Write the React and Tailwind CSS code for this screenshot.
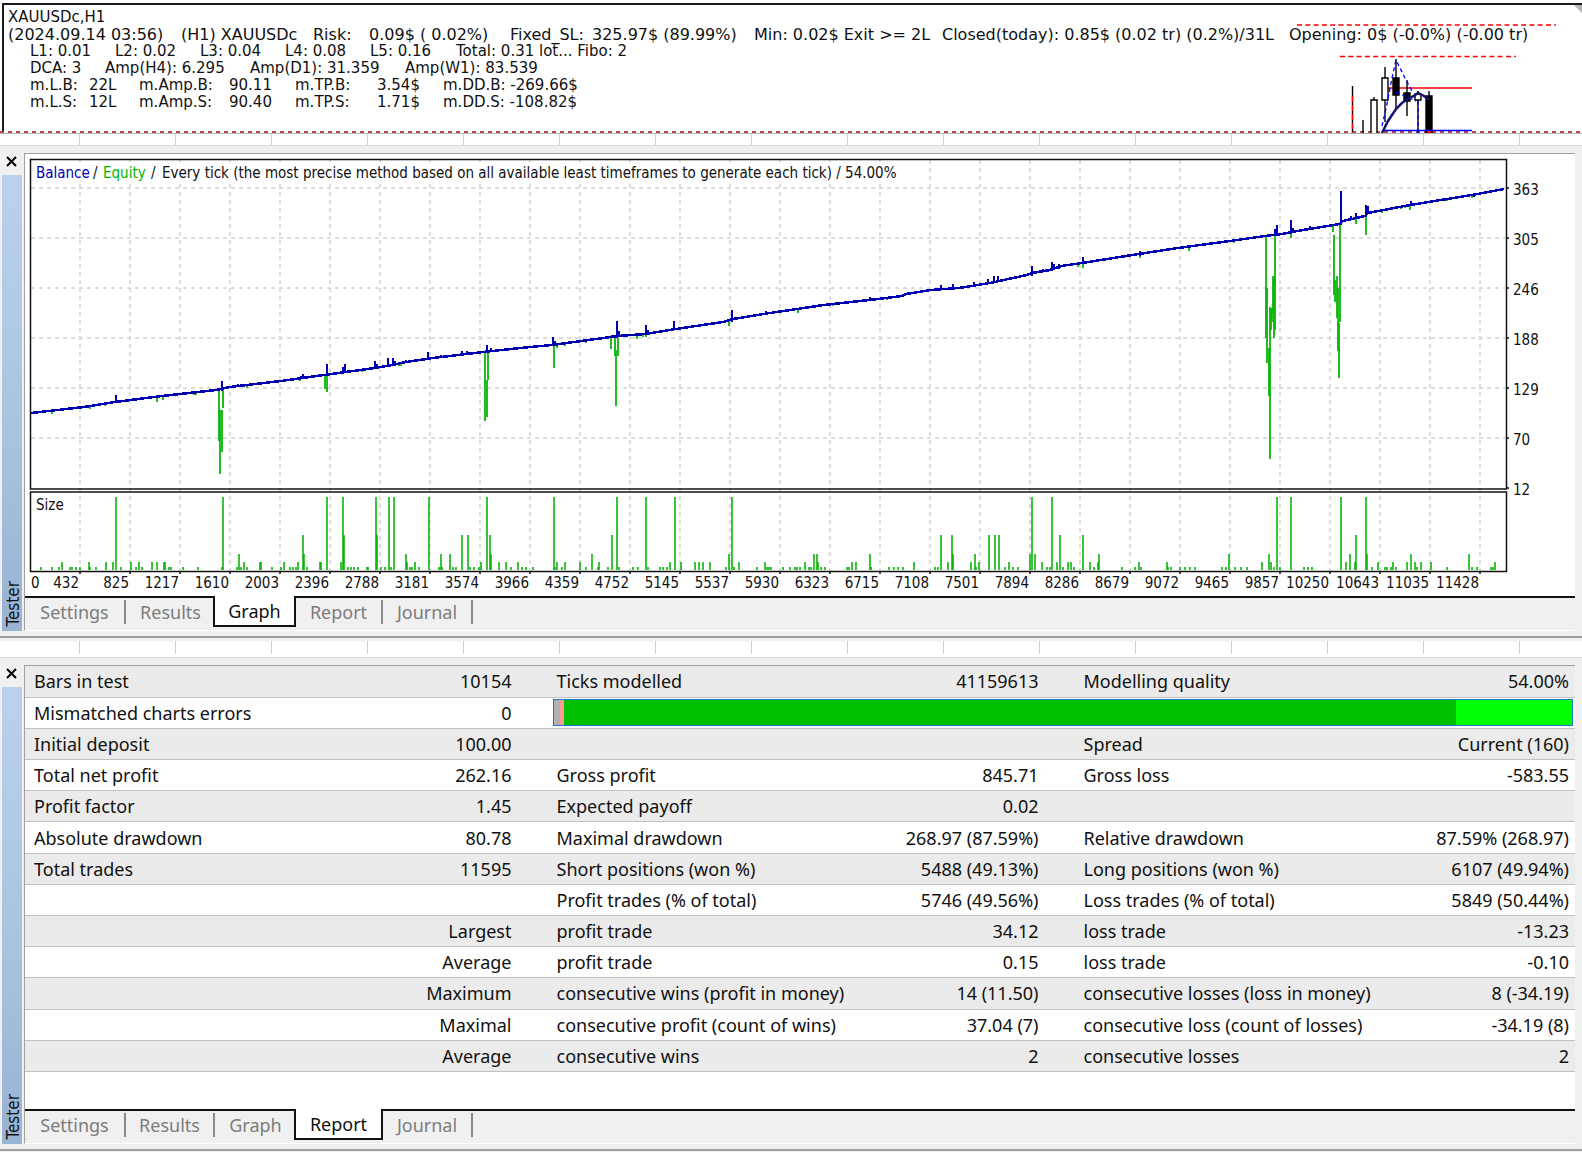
import React from 'react'

const TAHOMA = "font-['DejaVu_Sans_Condensed','Noto_Sans',sans-serif]"
const SEGOE = "font-['Noto_Sans','Open_Sans',sans-serif]"

/* ---------- terminal comment ---------- */

const comment = [
  {
    className: 'flex whitespace-pre text-[16px]',
    parts: [
      ['(2024.09.14 03:56)', 'w-[173px]'],
      ['(H1) XAUUSDc', 'w-[132px]'],
      ['Risk:', 'w-[56px]'],
      ['0.09$ ( 0.02%)', 'w-[141px]'],
      ['Fixed_SL:', 'w-[82px]'],
      ['325.97$ (89.99%)', 'w-[162px]'],
      ['Min: 0.02$ Exit >= 2L', 'w-[188px]'],
      ['Closed(today): 0.85$ (0.02 tr) (0.2%)/31L', 'w-[347px]'],
      ['Opening: 0$ (-0.0%) (-0.00 tr)', ''],
    ],
  },
  {
    className: 'flex whitespace-pre pl-[22px]',
    parts: [
      ['L1: 0.01', 'w-[85px]'],
      ['L2: 0.02', 'w-[85px]'],
      ['L3: 0.04', 'w-[85px]'],
      ['L4: 0.08', 'w-[85px]'],
      ['L5: 0.16', 'w-[86px]'],
      ['Total: 0.31 lot... Fibo: 2', ''],
    ],
  },
  {
    className: 'flex whitespace-pre pl-[22px]',
    parts: [
      ['DCA: 3', 'w-[75px]'],
      ['Amp(H4): 6.295', 'w-[145px]'],
      ['Amp(D1): 31.359', 'w-[155px]'],
      ['Amp(W1): 83.539', ''],
    ],
  },
  {
    className: 'flex whitespace-pre pl-[22px]',
    parts: [
      ['m.L.B:', 'w-[59px]'],
      ['22L', 'w-[50px]'],
      ['m.Amp.B:', 'w-[90px]'],
      ['90.11', 'w-[66px]'],
      ['m.TP.B:', 'w-[82px]'],
      ['3.54$', 'w-[66px]'],
      ['m.DD.B: -269.66$', ''],
    ],
  },
  {
    className: 'flex whitespace-pre pl-[22px]',
    parts: [
      ['m.L.S:', 'w-[59px]'],
      ['12L', 'w-[50px]'],
      ['m.Amp.S:', 'w-[90px]'],
      ['90.40', 'w-[66px]'],
      ['m.TP.S:', 'w-[82px]'],
      ['1.71$', 'w-[66px]'],
      ['m.DD.S: -108.82$', ''],
    ],
  },
]

function Candles() {
  return (
    <svg className="absolute top-0 right-0" width="300" height="133" viewBox="1282 0 300 133" aria-hidden="true">
      <path d="M1574 5h8v8z" fill="#b4b4b4" />
      <g stroke="#f00" strokeWidth="1.500" strokeDasharray="5 3.300">
        <path d="M1297 25H1556" />
        <path d="M1340 56.500H1516" />
      </g>
      <path d="M1388 88H1472" stroke="#f00" strokeWidth="1.400" />
      <path d="M1352.5 86V133" stroke="#000" strokeWidth="1.400" />
      <path d="M1352.5 96V133" stroke="#f00" strokeWidth="1.400" strokeDasharray="6 3" />
      <g stroke="#000" strokeWidth="1.4">
        <path d="M1363 120V133M1374 97V133M1385 67V122M1396 59V108M1407 80V116M1418 91V133M1429 91V97" />
        <path d="M1371 100h6v34h-6zM1382 78h6v22h-6zM1415 94h6v6h-6z" fill="#fff" />
        <path d="M1393 78h6v17h-6zM1404 93h6v8h-6zM1426 96h6v38h-6z" fill="#000" />
      </g>
      <path d="M1383 130.500H1472" stroke="#00f" strokeWidth="1.400" />
      <path d="M1427 131h4v2h-4z" fill="#f00" />
      <g fill="none" stroke="#00f" strokeWidth="1.3" strokeDasharray="4 3">
        <path d="M1382 126L1387 104L1392 78L1396 60L1405 78L1412 91" />
        <path d="M1396 92L1409 98L1416 101" />
        <path d="M1418 101V133" />
      </g>
      <path d="M1382 133L1388 121L1396 109L1402 103L1409 98L1414 96L1418 93L1424 96L1429 100" fill="none" stroke="#15156e" strokeWidth="2.500" />
    </svg>
  )
}

function Ruler({ className }) {
  return (
    <div
      className={
        'bg-white bg-[repeating-linear-gradient(to_right,transparent_0,transparent_79px,#cfcfcf_79px,#cfcfcf_80px,transparent_80px,transparent_96px)] ' +
        className
      }
    />
  )
}

/* ---------- balance graph ---------- */

const balance =
  'M31 413L84 407L115 402L162 396L216 390L230 387L281 381L324 375L375 368L392 365L406 362L433 358L483 352L530 347L552 345L618 336L645 334L676 329L723 322L733 319L770 313L824 305L878 299L902 296L906 294L931 290L959 288L990 283L1027 275L1032 273L1050 270L1061 266L1082 263L1126 256L1178 248L1230 241L1265 236L1282 234L1303 230L1340 224L1343 221L1365 216L1368 213L1410 205L1472 195L1504 189'

// [x, top, bottom] of the floating profit peaks
const peaks = [
  [116, 395, 403], [222, 381, 391], [238, 384, 387], [303, 374, 379], [301, 376, 379], [327, 364, 376], [343, 367, 373], [345, 364, 372],
  [375, 361, 369], [377, 364, 368], [388, 358, 366], [393, 358, 365], [395, 361, 365], [406, 360, 363], [428, 352, 359], [441, 355, 358],
  [462, 351, 355], [467, 351, 354], [487, 345, 353], [491, 348, 352], [553, 337, 346], [555, 341, 346], [612, 335, 338], [617, 321, 338],
  [619, 331, 337], [646, 325, 335], [648, 330, 334], [674, 321, 330], [732, 310, 322], [766, 311, 315], [819, 304, 307], [870, 297, 301],
  [941, 285, 290], [953, 284, 289], [974, 282, 286], [988, 279, 284], [994, 276, 283], [998, 276, 282], [1032, 266, 276], [1043, 269, 272],
  [1052, 262, 271], [1054, 264, 270], [1059, 264, 269], [1083, 257, 264], [1098, 259, 262], [1140, 251, 256], [1169, 248, 251],
  [1275, 229, 236], [1277, 225, 236], [1291, 220, 234], [1293, 228, 233], [1310, 226, 230], [1341, 191, 225], [1351, 216, 220],
  [1356, 213, 219], [1366, 205, 217], [1368, 206, 214], [1411, 201, 206], [1474, 193, 197],
]

// [x, top, bottom] of the equity dips
const dips = [
  [52, 409, 414], [90, 406, 409], [105, 403, 406], [143, 398, 400], [157, 396, 402], [163, 395, 400], [194, 392, 395], [196, 392, 395],
  [219, 390, 441], [220, 410, 474], [222, 410, 452], [223, 388, 408], [247, 385, 388], [300, 378, 381], [325, 376, 389], [327, 375, 392],
  [358, 370, 372], [362, 369, 372], [399, 363, 366], [401, 363, 366], [485, 352, 421], [487, 380, 417], [488, 352, 380], [554, 345, 368],
  [557, 345, 348], [565, 343, 346], [586, 341, 343], [611, 337, 349], [615, 338, 356], [616, 350, 406], [618, 338, 356], [637, 334, 339],
  [643, 334, 337], [646, 334, 337], [655, 331, 334], [662, 330, 333], [697, 325, 327], [729, 320, 326], [798, 308, 313], [808, 307, 309],
  [833, 304, 306], [887, 298, 300], [1078, 264, 267], [1083, 263, 268], [1140, 254, 258], [1189, 247, 251], [1234, 241, 243],
  [1266, 236, 338], [1267, 288, 363], [1269, 348, 396], [1270, 307, 459], [1271, 308, 330], [1272, 308, 322], [1273, 276, 313],
  [1274, 278, 338], [1275, 234, 330], [1291, 232, 238], [1333, 225, 232], [1334, 235, 295], [1335, 280, 302], [1337, 276, 318],
  [1338, 288, 351], [1339, 323, 378], [1340, 222, 322], [1356, 218, 224], [1366, 215, 235], [1382, 210, 213], [1401, 206, 209],
  [1405, 206, 208], [1410, 205, 210], [1447, 199, 201], [1472, 195, 198],
]

// order sizes: top coordinate of the bar and the positions that reach it
const sizes = [
  [497, [116, 223, 327, 343, 376, 389, 394, 429, 487, 554, 617, 646, 675, 732, 1032, 1052, 1277, 1291, 1341, 1366]],
  [535, [303, 344, 377, 462, 468, 490, 612, 941, 952, 989, 995, 999, 1060, 1083, 1356]],
  [554, [239, 304, 406, 441, 450, 491, 592, 729, 814, 817, 870, 953, 975, 1030, 1035, 1099, 1229, 1269, 1350, 1367, 1411, 1469]],
  [562, [62, 89, 106, 113, 131, 139, 152, 157, 164, 165, 244, 260, 261, 284, 298, 320, 321, 341, 407, 415, 481, 499, 506, 518, 557, 565, 580, 599, 670, 681, 695, 699, 703, 710, 739, 765, 805, 818, 852, 856, 914, 948, 971, 979, 1009, 1042, 1057, 1068, 1071, 1090, 1098, 1139, 1167, 1262, 1271, 1346, 1355, 1378, 1393, 1407, 1415, 1421, 1431, 1495]],
  [567, [41, 52, 59, 70, 72, 76, 80, 90, 96, 121, 136, 142, 169, 171, 183, 198, 222, 237, 241, 247, 272, 281, 290, 293, 296, 307, 348, 351, 354, 358, 367, 368, 381, 385, 391, 410, 412, 419, 439, 442, 453, 456, 470, 474, 479, 511, 522, 526, 533, 555, 562, 586, 598, 608, 619, 633, 638, 648, 660, 663, 667, 726, 734, 757, 767, 769, 771, 783, 790, 795, 797, 800, 809, 811, 821, 825, 847, 849, 871, 889, 894, 898, 903, 935, 938, 976, 1005, 1013, 1018, 1047, 1050, 1063, 1074, 1094, 1122, 1135, 1141, 1168, 1171, 1180, 1185, 1190, 1195, 1222, 1226, 1235, 1241, 1247, 1274, 1280, 1304, 1308, 1312, 1372, 1385, 1387, 1391, 1396, 1417, 1447, 1472, 1477, 1491, 1493]],
]

const strokes = (list) => list.map(([x, a, b]) => `M${x} ${a}V${b}`).join('')
const sizePath = sizes.map(([top, xs]) => xs.map((x) => `M${x} ${top}V570`).join('')).join('')

const columns = Array.from({ length: 29 }, (_, i) => 80 + 50 * i)
const levels = [[363, 188], [305, 238], [246, 288], [188, 338], [129, 388], [70, 438], [12, 488]]
const ticks = [432, 825, 1217, 1610, 2003, 2396, 2788, 3181, 3574, 3966, 4359, 4752, 5145, 5537, 5930, 6323, 6715, 7108, 7501, 7894, 8286, 8679, 9072, 9465, 9857, 10250, 10643, 11035, 11428]

function BalanceGraph() {
  return (
    <svg className={'block h-auto w-full bg-white text-[15px] ' + TAHOMA} viewBox="25 154 1550 442" role="img" aria-label="Balance and equity graph">
      <g stroke="#d2d2d2" strokeWidth="1.500" strokeDasharray="4 4">
        {columns.map((x) => (
          <path key={x} d={`M${x} 160V571`} />
        ))}
        {levels.slice(0, 6).map(([v, y]) => (
          <path key={v} d={`M31 ${y}H1505`} />
        ))}
      </g>
      <path d="M36 162H910V182H36zM36 498H66V514H36z" fill="#fff" />
      <path d={strokes(dips)} stroke="#0cb40c" strokeWidth="1.800" />
      <path d={strokes(peaks)} stroke="#0000b0" strokeWidth="2" />
      <path d={balance} fill="none" stroke="#0000b0" strokeWidth="2.500" shapeRendering="crispEdges" />
      <path d={sizePath} stroke="#0cb40c" strokeWidth="1.600" />
      <g fill="none" stroke="#111" strokeWidth="1.500">
        <path d="M30.500 159.500H1506.500V489H30.500z" />
        <path d="M30.500 492H1506.500V571.500H30.500z" />
        {columns.map((x) => (
          <path key={x} d={`M${x} 571V574`} />
        ))}
        {levels.map(([v, y]) => (
          <path key={v} d={`M1506 ${y}H1509`} />
        ))}
      </g>
      <g fill="#111">
        <text x="36" y="178" fill="#0000c0">Balance</text>
        <text x="93" y="178">/</text>
        <text x="103" y="178" fill="#00b400">Equity</text>
        <text x="151" y="178">/</text>
        <text x="162" y="178">
          Every tick (the most precise method based on all available least timeframes to generate each tick) / 54.00%
        </text>
        <text x="36" y="510">Size</text>
        {levels.map(([v, y]) => (
          <text key={v} x="1513" y={y + 7}>{v}</text>
        ))}
        <text x="31" y="588">0</text>
        {ticks.map((v, i) => (
          <text key={v} x={columns[i] - 1} y="588" textAnchor="end">{v}</text>
        ))}
      </g>
    </svg>
  )
}

/* ---------- report ---------- */

const report = [
  ['Bars in test', '10154', 'Ticks modelled', '41159613', 'Modelling quality', '54.00%'],
  ['Mismatched charts errors', '0', 'bar'],
  ['Initial deposit', '100.00', '', '', 'Spread', 'Current (160)'],
  ['Total net profit', '262.16', 'Gross profit', '845.71', 'Gross loss', '-583.55'],
  ['Profit factor', '1.45', 'Expected payoff', '0.02', '', ''],
  ['Absolute drawdown', '80.78', 'Maximal drawdown', '268.97 (87.59%)', 'Relative drawdown', '87.59% (268.97)'],
  ['Total trades', '11595', 'Short positions (won %)', '5488 (49.13%)', 'Long positions (won %)', '6107 (49.94%)'],
  ['', '', 'Profit trades (% of total)', '5746 (49.56%)', 'Loss trades (% of total)', '5849 (50.44%)'],
  ['', 'Largest', 'profit trade', '34.12', 'loss trade', '-13.23'],
  ['', 'Average', 'profit trade', '0.15', 'loss trade', '-0.10'],
  ['', 'Maximum', 'consecutive wins (profit in money)', '14 (11.50)', 'consecutive losses (loss in money)', '8 (-34.19)'],
  ['', 'Maximal', 'consecutive profit (count of wins)', '37.04 (7)', 'consecutive loss (count of losses)', '-34.19 (8)'],
  ['', 'Average', 'consecutive wins', '2', 'consecutive losses', '2'],
]

function QualityBar() {
  return (
    <div className="flex h-[27px] border border-[#1a78d0]">
      <div className="w-[6px] bg-[#b0b0b0]" />
      <div className="w-[4px] bg-[#ff9a9a]" />
      <div className="grow-[885] basis-0 bg-[#00c000]" />
      <div className="grow-[115] basis-0 bg-[#00ff00]" />
    </div>
  )
}

function Report() {
  return (
    <div className="bg-white pb-[37px]">
      <table className={'h-[406px] w-full table-fixed border-collapse text-[18px] leading-[24px] text-[#111] ' + SEGOE}>
        <colgroup>
          <col className="w-[20%]" />
          <col />
          <col className="w-[24%]" />
          <col className="w-[10%]" />
          <col className="w-[23%]" />
          <col className="w-[180px]" />
        </colgroup>
        <tbody>
          {report.map((r, i) => (
            <tr key={i} className="h-[31px] border-b border-[#c0c0c0] odd:bg-[#ebebeb]">
              <td className="p-0 pl-[9px] whitespace-nowrap">{r[0]}</td>
              <td className="p-0 text-right whitespace-nowrap">{r[1]}</td>
              {r[2] === 'bar' ? (
                <td colSpan={4} className="p-0 pr-[2px] pl-[41px]">
                  <QualityBar />
                </td>
              ) : (
                <>
                  <td className="p-0 pl-[45px] whitespace-nowrap">{r[2]}</td>
                  <td className="p-0 text-right whitespace-nowrap">{r[3]}</td>
                  <td className="p-0 pl-[45px] whitespace-nowrap">{r[4]}</td>
                  <td className="p-0 pr-[6px] text-right whitespace-nowrap">{r[5]}</td>
                </>
              )}
            </tr>
          ))}
        </tbody>
      </table>
    </div>
  )
}

/* ---------- tester panel ---------- */

const tabs = [
  { name: 'Settings', width: 'w-[101px]', selectedWidth: 'w-[101px]' },
  { name: 'Results', width: 'w-[89px]', selectedWidth: 'w-[91px]' },
  { name: 'Graph', width: 'w-[81px]', selectedWidth: 'w-[83px]' },
  { name: 'Report', width: 'w-[87px]', selectedWidth: 'w-[89px]' },
  { name: 'Journal', width: 'w-[90px]', selectedWidth: 'w-[92px]' },
]

function Tabs({ active }) {
  const current = tabs.findIndex((tab) => tab.name === active)
  return (
    <div role="tablist" className={'flex h-[34px] text-[18px] leading-[24px] ' + SEGOE}>
      {tabs.map(({ name, width, selectedWidth }, i) => {
        const selected = i === current
        const divided = !selected && i + 1 !== current
        return (
          <button
            key={name}
            type="button"
            role="tab"
            aria-selected={selected}
            className={
              selected
                ? selectedWidth + ' -ml-[2px] h-[31px] border-2 border-t-0 border-[#111] bg-white text-[#111]'
                : width + ' h-[31px] border-t-2 border-[#111] pb-[2px] text-[#7c7c7c]'
            }
          >
            <span className={'block h-[24px] ' + (divided ? 'border-r-2 border-[#8a8a8a]' : '')}>{name}</span>
          </button>
        )
      })}
      <div className="flex-1 border-t-2 border-[#111]" />
    </div>
  )
}

function TesterPanel({ active, children }) {
  return (
    <section className="flex bg-[#f0f0f0] pt-[7px] pr-[7px] pb-[5px] pl-[2px]">
      <div className={'flex w-[22px] flex-col pr-[2px] ' + TAHOMA}>
        <button type="button" aria-label="Close" className="flex h-[22px] items-start justify-center pt-[3px] pr-[2px]">
          <svg width="11" height="11" viewBox="0 0 11 11" aria-hidden="true">
            <path d="M1 1L10 10M10 1L1 10" stroke="#000" strokeWidth="2" />
          </svg>
        </button>
        <div className="flex flex-1 items-center bg-linear-to-b from-[#bad1ee] via-[#abc5e0] to-[#98b3d3] pb-[4px] pl-[2px] text-[17px] leading-[18px] text-[#111] [writing-mode:sideways-lr]">
          Tester
        </div>
      </div>
      <div className="min-w-0 flex-1 border-t border-b border-l border-t-[#a0a0a0] border-b-white border-l-[#a0a0a0]">
        {children}
        <Tabs active={active} />
      </div>
    </section>
  )
}

export default function App() {
  return (
    <main className="w-full overflow-hidden bg-white">
      <header className="relative pt-[3px]">
        <div className="ml-[2px] h-[130px] border-t-2 border-l-2 border-[#1a1a1a] pt-[4px] pl-[4px] font-['DejaVu_Sans',sans-serif] text-[15px] leading-[17px] text-[#111]">
          <p>XAUUSDc,H1</p>
          {comment.map((line, i) => (
            <p key={i} className={line.className}>
              {line.parts.map(([text, width]) => (
                <span key={text} className={'shrink-0 ' + width}>{text}</span>
              ))}
            </p>
          ))}
        </div>
        <div className="-mt-[2px] h-[2px] bg-[repeating-linear-gradient(to_right,#c04a4a_0,#c04a4a_4px,transparent_4px,transparent_8px)]" />
        <div className="h-px bg-[#b0b0b0]" />
        <Candles />
      </header>
      <Ruler className="h-[11px]" />
      <div className="h-px bg-[#dcdcdc]" />
      <TesterPanel active="Graph">
        <BalanceGraph />
      </TesterPanel>
      <div className="h-[2px] bg-[#a0a0a0]" />
      <div className="h-[3px] bg-[#f0f0f0]" />
      <Ruler className="h-[13px]" />
      <div className="h-[4px] border-b border-[#dcdcdc]" />
      <TesterPanel active="Report">
        <Report />
      </TesterPanel>
      <div className="h-[2px] bg-[#a0a0a0]" />
      <div className="h-[2px] bg-[#f0f0f0]" />
    </main>
  )
}
